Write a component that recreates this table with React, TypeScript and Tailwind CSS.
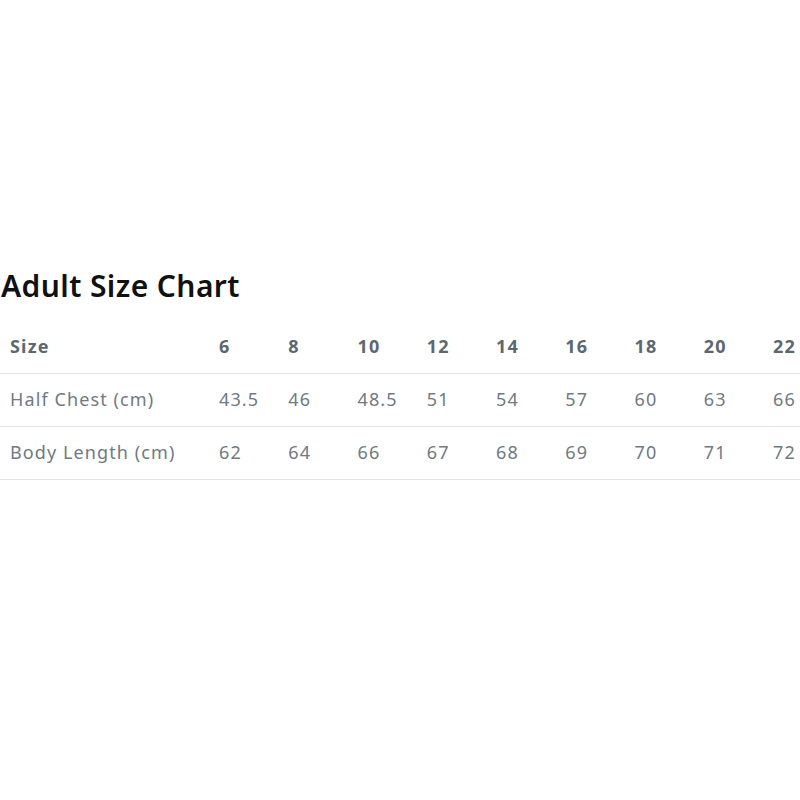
import React from 'react';

const sizes = ['6', '8', '10', '12', '14', '16', '18', '20', '22'];

const rows = [
  { label: 'Half Chest (cm)', values: ['43.5', '46', '48.5', '51', '54', '57', '60', '63', '66'] },
  { label: 'Body Length (cm)', values: ['62', '64', '66', '67', '68', '69', '70', '71', '72'] },
];

export default function App() {
  return (
    <div className="w-[800px] h-[800px] bg-white overflow-hidden font-['Noto_Sans',sans-serif]">
      <div className="pt-[266px]">
        <h2 className="pl-[1px] text-[30px] leading-[40px] font-semibold text-[#111111] tracking-[0.4px]">
          Adult Size Chart
        </h2>
        <table className="mt-[14px] table-fixed border-collapse w-[832px]">
          <colgroup>
            <col className="w-[209px]" />
            {sizes.map((s) => (
              <col key={s} className="w-[69.25px]" />
            ))}
          </colgroup>
          <thead>
            <tr className="h-[53px] border-b border-[#e2e4e5]">
              <th className="pl-[10px] text-left text-[18px] tracking-[1.2px] font-bold text-[#5c6870]">Size</th>
              {sizes.map((s) => (
                <th key={s} className="pl-[10px] text-left text-[18px] tracking-[1.2px] font-bold text-[#5c6870]">
                  {s}
                </th>
              ))}
            </tr>
          </thead>
          <tbody>
            {rows.map((r) => (
              <tr key={r.label} className="h-[53px] border-b border-[#e2e4e5]">
                <td className="pl-[10px] text-[18px] tracking-[1.1px] text-[#6f7a82]">{r.label}</td>
                {r.values.map((v, i) => (
                  <td key={i} className="pl-[10px] text-[18px] tracking-[1.1px] text-[#6f7a82]">
                    {v}
                  </td>
                ))}
              </tr>
            ))}
          </tbody>
        </table>
      </div>
    </div>
  );
}
